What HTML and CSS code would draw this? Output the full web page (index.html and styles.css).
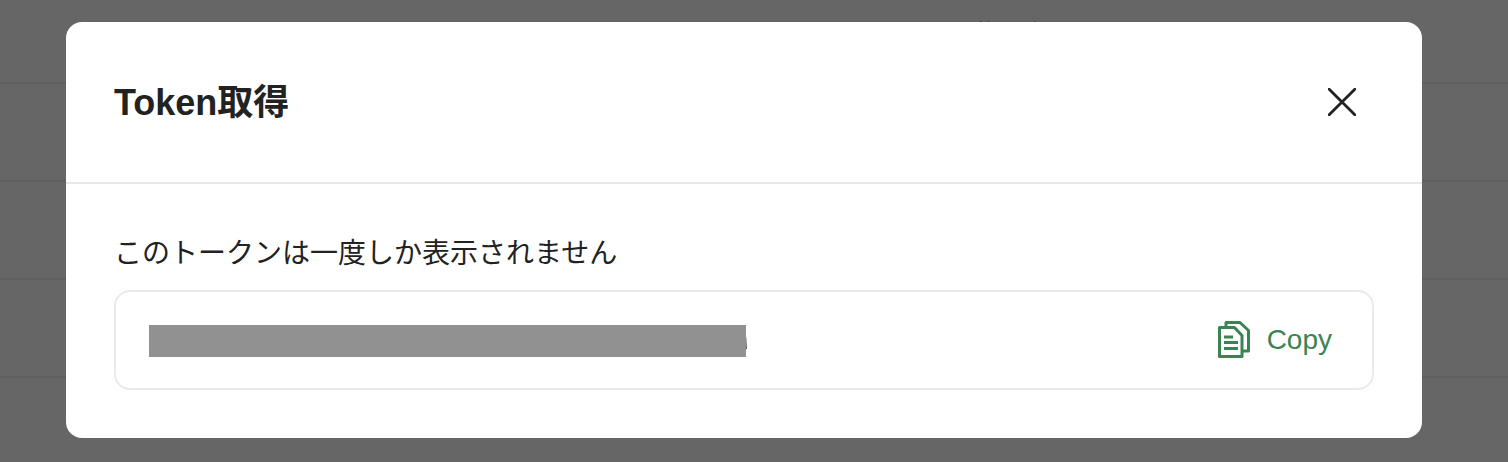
FILE: index.html
```html
<!DOCTYPE html>
<html lang="ja">
<head>
    <meta charset="UTF-8">
    <meta name="viewport" content="width=device-width, initial-scale=1.0">
    <title>Token取得</title>
    <link rel="stylesheet" href="styles.css">
</head>
<body>
    <div class="page-rows">
        <div class="page-row"><span>権限名称</span></div>
        <div class="page-row"></div>
        <div class="page-row"></div>
        <div class="page-row"></div>
        <div class="page-row"><span>利用権限</span></div>
    </div>

    <div class="overlay">
        <div class="modal">
            <header class="modal-header">
                <h1>Token取得</h1>
                <button class="close-button" aria-label="閉じる">
                    <svg width="28" height="28" viewBox="0 0 28 28" fill="none" stroke="currentColor" stroke-width="2.8" stroke-linecap="round">
                        <path d="M1.2 1.2 26.8 26.8M26.8 1.2 1.2 26.8"/>
                    </svg>
                </button>
            </header>
            <div class="modal-body">
                <p class="notice">このトークンは一度しか表示されません</p>
                <div class="token-box">
                    <div class="token-value"></div>
                    <button class="copy-button">
                        <svg width="34" height="40" viewBox="0 0 34 40" fill="none" stroke="currentColor" stroke-width="3" stroke-linejoin="round">
                            <path d="M2.5 7.5H17.5L25 15.5V36.5H2.5Z"/>
                            <path d="M9 7.5V2.5H23L31.5 10.5V31H25"/>
                            <path d="M7 17H16M7 22.5H21M7 28.5H21"/>
                        </svg>
                        Copy
                    </button>
                </div>
            </div>
        </div>
    </div>
</body>
</html>
```
FILE: styles.css
```css
* {
    margin: 0;
    padding: 0;
    box-sizing: border-box;
}
body {
    font-family: "Liberation Sans", "Noto Sans CJK JP", sans-serif;
    background-color: #ffffff;
    color: #222222;
    height: 462px;
    overflow: hidden;
}
.page-rows {
    margin-top: -14px;
}
.page-row {
    height: 98px;
    border-bottom: 2px solid #eeeeee;
    padding-left: 975px;
    padding-bottom: 4px;
    display: flex;
    align-items: center;
    font-size: 25px;
}
.overlay {
    position: fixed;
    inset: 0;
    background-color: rgba(0, 0, 0, 0.6);
    padding: 22px 86px 24px 66px;
}
.modal {
    background: #ffffff;
    border-radius: 16px;
    height: 416px;
}
.modal-header {
    height: 162px;
    border-bottom: 2px solid #e6e6ec;
    padding: 0 66px 0 48px;
    display: flex;
    align-items: center;
    justify-content: space-between;
}
.modal-header h1 {
    font-size: 36px;
    font-weight: bold;
    line-height: 1.2;
    margin-top: 2px;
}
.close-button {
    display: flex;
    background: none;
    border: none;
    color: #222222;
}
.modal-body {
    padding: 51px 48px 48px;
}
.notice {
    font-size: 28px;
    line-height: 38px;
    margin-bottom: 17px;
}
.token-box {
    height: 100px;
    border: 2px solid #eaeaea;
    border-radius: 16px;
    padding: 0 40px 0 33px;
    display: flex;
    align-items: center;
    justify-content: space-between;
}
.token-value {
    position: relative;
    width: 597px;
    height: 32px;
    margin-top: 2px;
    background-color: #919191;
}
.token-value::after {
    content: "";
    position: absolute;
    left: 100%;
    top: 12px;
    width: 1px;
    height: 12px;
    background: linear-gradient(#dddddd, #555555);
}
.copy-button {
    display: flex;
    align-items: center;
    gap: 16px;
    background: none;
    border: none;
    color: #3a8451;
    font-family: inherit;
    font-size: 28px;
}
```
